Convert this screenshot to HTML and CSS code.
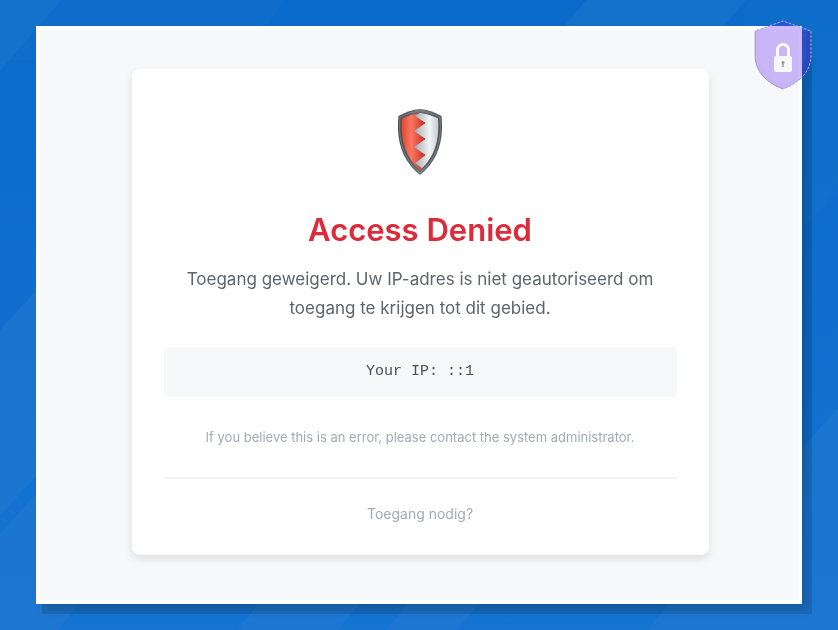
FILE: index.html
```html
<!DOCTYPE html>
<html lang="nl">
<head>
<meta charset="utf-8">
<meta name="viewport" content="width=device-width, initial-scale=1">
<title>Access Denied</title>
<link rel="stylesheet" href="styles.css">
</head>
<body>
<svg class="backdrop" viewBox="0 0 838 630" preserveAspectRatio="none" aria-hidden="true">
  <defs>
    <linearGradient id="sky" x1="0" y1="0" x2="0" y2="1"><stop offset="0" stop-color="#0b6bca"/><stop offset="1" stop-color="#1573d1"/></linearGradient>
  </defs>
  <path fill="url(#sky)" d="M0 0h838v630H0z"/>
  <g fill="#fff" fill-opacity=".035">
    <path d="M0 0h62L0 71z"/>
    <path d="M586 0h160L646 120H486z"/>
    <path d="M0 330L72 252V436L0 516z"/>
    <path d="M0 534L72 454H200L58 630H0z"/>
    <path d="M237 630L320 530H421L338 630z"/>
    <path d="M386 630L469 530H540L457 630z"/>
    <path d="M838 408v222H647L740 518z"/>
  </g>
  <g fill="#fff" fill-opacity=".015">
    <path d="M62 0H286L240 60H10z"/>
    <path d="M746 0h92V190L740 297V60z"/>
  </g>
</svg>
<div class="frame">
  <main class="card">
    <svg class="shield" viewBox="0 0 44 66" aria-hidden="true">
      <defs>
        <linearGradient id="rim"><stop offset="0" stop-color="#494d4f"/><stop offset=".5" stop-color="#6c7072"/><stop offset="1" stop-color="#505456"/></linearGradient>
        <linearGradient id="red"><stop offset="0" stop-color="#dc4935"/><stop offset=".4" stop-color="#ff7662"/><stop offset="1" stop-color="#bd2c1b"/></linearGradient>
        <linearGradient id="silver"><stop offset="0" stop-color="#a4a9ad"/><stop offset=".65" stop-color="#f2f5f7"/><stop offset="1" stop-color="#c4cbd0"/></linearGradient>
      </defs>
      <path fill="url(#rim)" d="M22 0Q33 1 43.500 7C46 32 40 52 22 66C4 52-2 32 .5 7Q11 1 22 0z"/>
      <path fill="url(#silver)" d="M22 4Q31 5 40 9.500C41.500 31 37 47 22 61z"/>
      <path fill="url(#red)" d="M22 4Q13 5 4 9.500C2.500 31 7 47 22 61L24 59 17 54 28 46 16 38 28 30 16 22 28 14 17 7z"/>
      <path fill="url(#silver)" d="M22 4L17 7 28 14 16 22 28 30 16 38 28 46 17 54 24 59C36 47 41 31 40 9.500Q31 5 22 4z"/>
      <path fill="none" stroke="#aeb2b4" stroke-width=".8" opacity=".5" d="M22 1.500Q32 3 42 8C44 31 39 50 22 64C5 50 0 31 2 8Q12 3 22 1.500z"/>
    </svg>
    <h1 class="title">Access Denied</h1>
    <p class="message">Toegang geweigerd. Uw IP-adres is niet geautoriseerd om toegang te krijgen tot dit gebied.</p>
    <p class="address">Your IP: ::1</p>
    <p class="hint">If you believe this is an error, please contact the system administrator.</p>
    <footer class="footer"><a class="request" href="#">Toegang nodig?</a></footer>
  </main>
  <svg class="badge" viewBox="0 0 58 70" aria-hidden="true">
    <path fill="#6425f0" fill-opacity=".32" stroke="#6e7cb8" stroke-opacity=".6" d="M29 1L57 11V35C57 52 45 63 29 69C13 63 1 52 1 35V11z"/>
    <path fill="#fff" fill-opacity=".04" d="M29 6L52 14V35C52 49 42 58 29 64C16 58 6 49 6 35V14z"/>
    <path fill="none" stroke="#fff" stroke-opacity=".5" stroke-dasharray="2 2" d="M1 11L29 1L57 11V35C57 52 45 63 29 69"/>
    <path fill="none" stroke="#fff" stroke-width="3" d="M23.500 37V30a5.500 5.500 0 0 1 11 0v7"/>
    <rect x="20" y="36" width="18" height="16" rx="2" fill="#f7f7fa"/>
    <circle cx="29" cy="42.500" r="1.500" fill="#999"/>
    <path stroke="#999" stroke-width="1.500" d="M29 42v5"/>
  </svg>
</div>
</body>
</html>
```

FILE: styles.css
```css
* { box-sizing: border-box; }
body {
  margin: 0;
  min-height: 100vh;
  display: flex;
  padding: 26px 36px;
  background: #1170cd;
  font-family: Inter, "Liberation Sans", sans-serif;
}
.backdrop {
  position: fixed;
  inset: 0;
  width: 100%;
  height: 100%;
  z-index: -1;
}
.frame {
  position: relative;
  flex: 1;
  display: flex;
  align-items: flex-start;
  justify-content: center;
  padding: 39px 30px 39px 32px;
  border: 4px solid #fff;
  background: #f7f8fa;
  box-shadow: 8px 8px 0 2px rgba(0, 0, 0, 0.12), 6px 6px 10px -2px rgba(0, 0, 0, 0.15);
}
.card {
  flex: 0 1 577px;
  padding: 40px 32px 30px;
  border-radius: 8px;
  background: #fff;
  box-shadow: 0 4px 8px rgba(0, 0, 0, 0.1);
  text-align: center;
}
.shield {
  display: block;
  width: 44px;
  height: 66px;
  margin: 0 auto 34px;
}
.title {
  margin: 0 0 14px;
  color: #dc2c3c;
  font-size: 31px;
  font-weight: 600;
  line-height: 42px;
}
.message {
  margin: 0 0 24px;
  color: #5c656e;
  font-size: 17px;
  line-height: 29px;
}
.address {
  margin: 0 0 30px;
  padding: 13px 16px;
  border-radius: 4px;
  background: #f7f8fa;
  color: #495057;
  font-family: "Liberation Mono", monospace;
  font-size: 15px;
  line-height: 24px;
}
.hint {
  margin: 0 0 30px;
  color: #a2abb5;
  font-size: 13px;
  line-height: 20px;
}
.footer {
  padding-top: 24px;
  border-top: 2px solid #f0f1f2;
}
.request {
  color: #a2abb5;
  font-size: 14px;
  line-height: 22px;
  text-decoration: none;
}
.badge {
  position: absolute;
  top: -10px;
  right: -14px;
  width: 58px;
  height: 70px;
}
```
